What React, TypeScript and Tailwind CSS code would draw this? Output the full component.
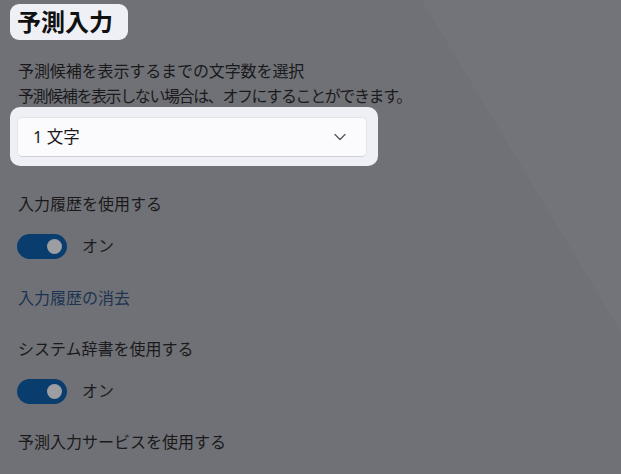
import { ChevronDown } from "lucide-react";

const Toggle = () => {
  return (
    <div className="flex items-center gap-[15px]">
      <div className="flex h-[25px] w-[50px] items-center justify-end rounded-full bg-[#083d6e] pr-[5px]">
        <div className="h-[15px] w-[15px] rounded-full bg-[#9d9ea2]" />
      </div>
      <span className="text-[16px] leading-[25px] text-[#1c1c1e]">オン</span>
    </div>
  );
};

const App = () => {
  return (
    <div
      className="h-[474px] w-[621px] overflow-hidden bg-[linear-gradient(59deg,#707176_0,#707176_78%,#737479_78%,#737479_100%)] pt-[4px]"
      style={{ fontFamily: '"Noto Sans", "Noto Sans CJK JP", sans-serif' }}
    >
      {/* Title */}
      <div className="ml-[10px] flex h-[36px] w-[118px] items-center rounded-[9px] bg-[#eef0f6] px-[7px]">
        <h1 className="text-[24px] font-bold leading-none text-[#111111]">予測入力</h1>
      </div>

      {/* Description */}
      <div className="ml-[18px] mt-[19px] text-[16px] leading-[25px] text-[#1a1a1c]">
        <p className="tracking-[-0.1px]">予測候補を表示するまでの文字数を選択</p>
        <p className="tracking-[-1.4px]">予測候補を表示しない場合は、オフにすることができます。</p>
      </div>

      {/* Dropdown */}
      <div className="ml-[10px] mt-[-2px] w-[368px] rounded-[10px] bg-[#eef0f6] pb-[9px] pl-[7px] pr-[11px] pt-[10px]">
        <div className="flex h-[40px] items-center justify-between rounded-[5px] border border-[#e3e4ea] border-b-[#cfd0d6] bg-[#fbfbfd] pl-[15px] pr-[16px]">
          <span className="text-[16.5px] text-[#1a1a1a]">1 文字</span>
          <ChevronDown className="h-[20px] w-[20px] text-[#55565a]" strokeWidth={1.5} />
        </div>
      </div>

      {/* Settings */}
      <div className="ml-[18px] mt-[26px] flex flex-col text-[16px] leading-[25px] text-[#1a1a1c]">
        <p>入力履歴を使用する</p>
        <div className="mt-[17px] -ml-[1px]">
          <Toggle />
        </div>
        <p className="mt-[27px] text-[#1c3452]">入力履歴の消去</p>
        <p className="mt-[26px]">システム辞書を使用する</p>
        <div className="mt-[17px] -ml-[1px]">
          <Toggle />
        </div>
        <p className="mt-[26px]">予測入力サービスを使用する</p>
      </div>
    </div>
  );
};

export default App;
